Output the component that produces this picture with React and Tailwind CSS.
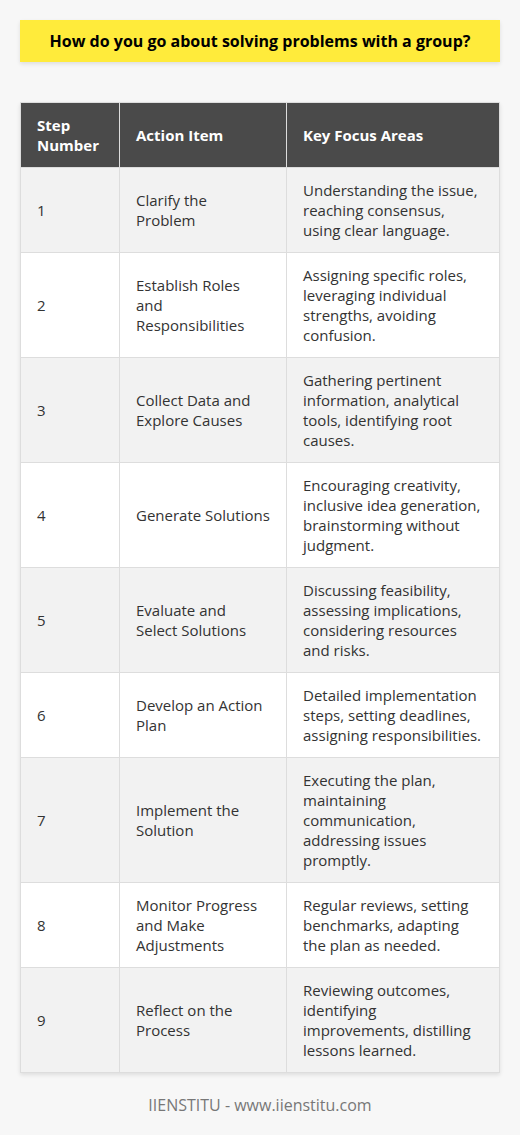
import React from "react";

const rows = [
  ["1", "Clarify the Problem", "Understanding the issue, reaching consensus, using clear language."],
  ["2", "Establish Roles and Responsibilities", "Assigning specific roles, leveraging individual strengths, avoiding confusion."],
  ["3", "Collect Data and Explore Causes", "Gathering pertinent information, analytical tools, identifying root causes."],
  ["4", "Generate Solutions", "Encouraging creativity, inclusive idea generation, brainstorming without judgment."],
  ["5", "Evaluate and Select Solutions", "Discussing feasibility, assessing implications, considering resources and risks."],
  ["6", "Develop an Action Plan", "Detailed implementation steps, setting deadlines, assigning responsibilities."],
  ["7", "Implement the Solution", "Executing the plan, maintaining communication, addressing issues promptly."],
  ["8", "Monitor Progress and Make Adjustments", "Regular reviews, setting benchmarks, adapting the plan as needed."],
  ["9", "Reflect on the Process", "Reviewing outcomes, identifying improvements, distilling lessons learned."],
];

const App = () => {
  return (
    <div className="min-h-[1135px] bg-[#f7f7f7] p-5 font-['Open_Sans','Liberation_Sans',sans-serif] text-[#333]">
      <div className="bg-[#ffeb3b] py-3 text-center shadow-[0_2px_4px_rgba(0,0,0,0.1)]">
        <h1 className="text-base leading-[18px] font-bold text-black">
          How do you go about solving problems with a group?
        </h1>
      </div>

      <table className="mt-10 w-full table-fixed border-collapse text-[15px] leading-5 shadow-[0_2px_4px_rgba(0,0,0,0.1)]">
        <thead>
          <tr className="bg-[#4a4a4a] text-left text-white">
            <th className="w-[99px] border border-[#ddd] px-4 py-3 font-bold">Step Number</th>
            <th className="w-[167px] border border-[#ddd] px-4 py-3 font-bold">Action Item</th>
            <th className="border border-[#ddd] px-4 py-3 font-bold">Key Focus Areas</th>
          </tr>
        </thead>
        <tbody>
          {rows.map(([n, action, focus], i) => (
            <tr key={n} className={i % 2 === 0 ? "bg-[#f2f2f2]" : "bg-white"}>
              <td className="border border-[#ddd] px-4 py-3">{n}</td>
              <td className="border border-[#ddd] px-4 py-3">{action}</td>
              <td className="border border-[#ddd] px-4 py-3">{focus}</td>
            </tr>
          ))}
        </tbody>
      </table>

      <p className="mt-5 text-center text-base leading-6 text-[#777]">IIENSTITU - www.iienstitu.com</p>
    </div>
  );
};

export default App;
